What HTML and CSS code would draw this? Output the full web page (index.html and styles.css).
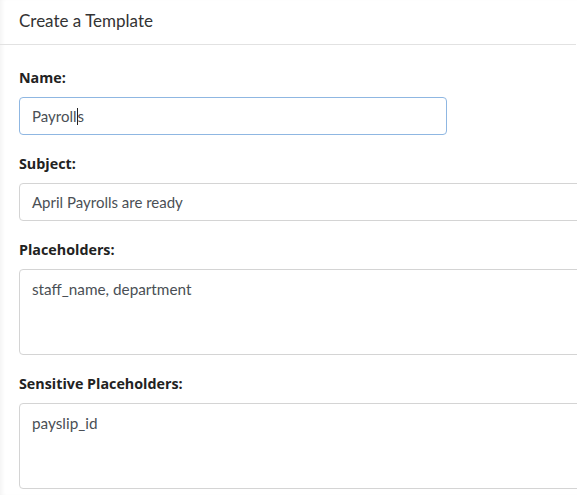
FILE: index.html
```html
<!DOCTYPE html>
<html>
<head>
<meta charset="utf-8">
<link rel="stylesheet" href="styles.css">
</head>
<body>
<div class="modal">
  <div class="modal-header">
    <h5 class="modal-title">Create a Template</h5>
  </div>
  <div class="modal-body">
    <div class="group">
      <label class="label">Name:</label>
      <div class="field field-focus field-name">Payroll<span class="caret"></span>s</div>
    </div>
    <div class="group">
      <label class="label">Subject:</label>
      <div class="field field-wide">April Payrolls are ready</div>
    </div>
    <div class="group">
      <label class="label">Placeholders:</label>
      <div class="field field-wide area">staff_name, department</div>
    </div>
    <div class="group">
      <label class="label">Sensitive Placeholders:</label>
      <div class="field field-wide area">payslip_id</div>
    </div>
  </div>
</div>
</body>
</html>
```
FILE: styles.css
```css
html, body {
  margin: 0;
  padding: 0;
  background: #fff;
  overflow: hidden;
}
body {
  font-family: "Lato", "Liberation Sans", sans-serif;
  color: #212529;
}
.modal {
  width: 577px;
  height: 495px;
  box-shadow: inset 4px 0 4px -2px rgba(0, 0, 0, 0.05);
  overflow: hidden;
}
.modal-header {
  height: 44px;
  border-bottom: 1px solid #e2e2e2;
  padding-left: 19px;
  display: flex;
  align-items: center;
  margin-right: 1px;
}
.modal-title {
  margin: 0;
  font-size: 17px;
  font-weight: 400;
  color: #333;
  line-height: 22px;
  position: relative;
  top: -1px;
}
.modal-body {
  padding: 23px 0 0 19px;
}
.group {
  margin-bottom: 19px;
}
.label {
  display: block;
  font-family: "Open Sans", "Lato", sans-serif;
  font-size: 14.3px;
  font-weight: 700;
  line-height: 20px;
  margin-bottom: 9px;
  color: #222;
}
.field {
  box-sizing: border-box;
  height: 38px;
  border: 1px solid #d4d4d4;
  border-radius: 4px;
  padding: 0 12px;
  font-size: 15px;
  line-height: 36px;
  color: #4a4f55;
  background: #fff;
  white-space: nowrap;
}
.field-name {
  width: 428px;
}
.field-wide {
  width: 640px;
}
.field-focus {
  border-color: #8fb7e2;
}
.area {
  height: 86px;
  line-height: 22px;
  padding-top: 8px;
  font-size: 15.3px;
}
.caret {
  display: inline-block;
  width: 1px;
  height: 17px;
  background: #222;
  vertical-align: -3px;
}
```
